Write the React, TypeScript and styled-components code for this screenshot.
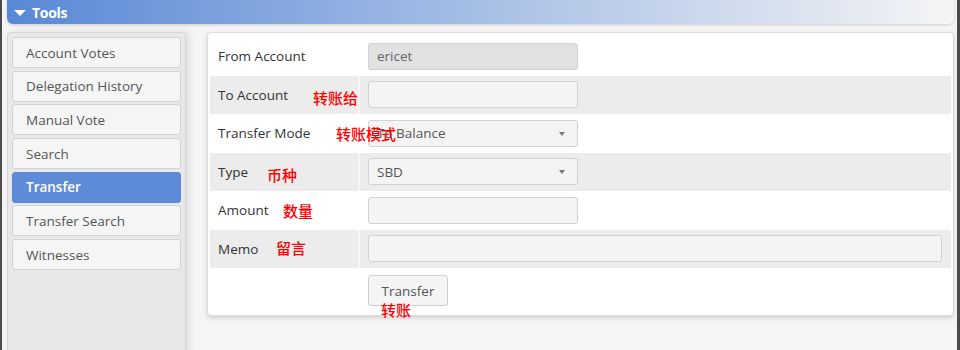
import React from "react";
import styled, { createGlobalStyle } from "styled-components";

const GlobalStyle = createGlobalStyle`
  html, body { margin: 0; padding: 0; }
  body {
    background: #f5f5f5;
    font-family: "Open Sans", "Noto Sans", sans-serif;
    overflow: hidden;
  }
`;

const Frame = styled.div`
  height: 350px;
  box-sizing: border-box;
  border-left: 2px solid #4a4a4a;
  border-right: 3px solid #4a4a4a;
  padding: 0 3px 0 5px;
  background: #f5f5f5;
  overflow: hidden;
`;

const Header = styled.div`
  height: 24px;
  box-sizing: border-box;
  border-radius: 0 0 6px 6px;
  background: linear-gradient(to right, #5888d6, #f5f5f5);
  box-shadow: 0 1px 3px rgba(0, 0, 0, 0.18);
  display: flex;
  align-items: center;
  padding-left: 7px;
  gap: 6px;
  color: #fff;
  font-weight: 700;
  font-size: 14px;
  letter-spacing: -0.3px;
`;

const Caret = styled.span`
  width: 0;
  height: 0;
  border-left: 6px solid transparent;
  border-right: 6px solid transparent;
  border-top: 6px solid #fff;
  margin-top: 1px;
`;

const Body = styled.div`
  display: flex;
  align-items: flex-start;
  gap: 21px;
  margin-top: 8px;
`;

const Sidebar = styled.nav`
  width: 179px;
  height: 340px;
  flex: none;
  box-sizing: border-box;
  background: #e8e8e8;
  border: 1px solid #d6d6d6;
  border-radius: 4px 4px 0 0;
  padding: 4px;
  box-shadow: 3px 0 8px rgba(0, 0, 0, 0.1);
  display: flex;
  flex-direction: column;
  gap: 2.7px;
`;

const NavItem = styled.div<{ $active?: boolean }>`
  height: 31px;
  box-sizing: border-box;
  border: 1px solid ${(p) => (p.$active ? "#5b89d6" : "#d3d3d3")};
  border-radius: 3px;
  background: ${(p) => (p.$active ? "#5e8bd7" : "#f5f5f5")};
  color: ${(p) => (p.$active ? "#fff" : "#555")};
  font-weight: ${(p) => (p.$active ? 600 : 400)};
  font-size: 13.5px;
  display: flex;
  align-items: center;
  padding-left: 13px;
`;

const Panel = styled.div`
  flex: 1;
  background: #fff;
  border: 1px solid #dcdcdc;
  border-radius: 4px;
  box-shadow: 0 2px 5px rgba(0, 0, 0, 0.15);
  padding: 4px 2px 4px 2px;
`;

const Row = styled.div<{ $alt?: boolean; $h?: number }>`
  display: grid;
  grid-template-columns: 148px 1fr;
  column-gap: 2px;
  height: ${(p) => p.$h ?? 38.5}px;
  background: ${(p) => (p.$alt ? "#ececec" : "#fff")};
  position: relative;
`;

const LabelCell = styled.div`
  position: relative;
  display: flex;
  align-items: center;
  padding-left: 8px;
  font-size: 13.5px;
  color: #333;
`;

const ValueCell = styled.div<{ $top?: boolean }>`
  position: relative;
  display: flex;
  align-items: ${(p) => (p.$top ? "flex-start" : "center")};
  padding: ${(p) => (p.$top ? "7px 9px 0 8px" : "0 9px 0 8px")};
  box-shadow: -2px 0 0 rgba(255, 255, 255, 0.6);
`;

const TextInput = styled.input<{ $wide?: boolean; $readonly?: boolean }>`
  box-sizing: border-box;
  width: ${(p) => (p.$wide ? "100%" : "210px")};
  height: 27px;
  border: 1px solid #d2d2d2;
  border-radius: 3px;
  background: ${(p) => (p.$readonly ? "#e1e1e1" : "#f4f4f4")};
  color: #666;
  font-family: "Open Sans", sans-serif;
  font-size: 13.5px;
  padding: 0 8px;
  outline: none;
`;

const SelectWrap = styled.div`
  position: relative;
  width: 210px;
  height: 27px;
  &::after {
    content: "";
    position: absolute;
    right: 13px;
    top: 12px;
    border-left: 3.5px solid transparent;
    border-right: 3.5px solid transparent;
    border-top: 4px solid #777;
  }
`;

const Select = styled.select`
  appearance: none;
  -webkit-appearance: none;
  box-sizing: border-box;
  width: 100%;
  height: 27px;
  border: 1px solid #d2d2d2;
  border-radius: 3px;
  background: #f4f4f4;
  color: #555;
  font-family: "Open Sans", sans-serif;
  font-size: 13.5px;
  padding: 0 8px;
  outline: none;
`;

const Button = styled.button`
  box-sizing: border-box;
  width: 80px;
  height: 31px;
  border: 1px solid #cfcfcf;
  border-radius: 3px;
  background: #f4f4f4;
  color: #555;
  font-family: "Open Sans", sans-serif;
  font-size: 13.5px;
`;

const Note = styled.span<{ $x: number; $y: number }>`
  position: absolute;
  left: ${(p) => p.$x}px;
  top: ${(p) => p.$y}px;
  z-index: 2;
  color: #ff0000;
  font-family: "Noto Sans CJK SC", sans-serif;
  font-weight: 500;
  font-size: 15px;
  line-height: 15px;
  white-space: nowrap;
  pointer-events: none;
`;

const navItems = [
  "Account Votes",
  "Delegation History",
  "Manual Vote",
  "Search",
  "Transfer",
  "Transfer Search",
  "Witnesses",
];

export default function App() {
  return (
    <>
      <GlobalStyle />
      <Frame>
        <Header>
          <Caret />
          Tools
        </Header>
        <Body>
          <Sidebar>
            {navItems.map((n) => (
              <NavItem key={n} $active={n === "Transfer"}>
                {n}
              </NavItem>
            ))}
          </Sidebar>
          <Panel>
            <Row>
              <LabelCell>From Account</LabelCell>
              <ValueCell>
                <TextInput $readonly readOnly value="ericet" />
              </ValueCell>
            </Row>
            <Row $alt>
              <LabelCell>
                To Account
                <Note $x={103} $y={14.5}>转账给</Note>
              </LabelCell>
              <ValueCell>
                <TextInput defaultValue="" />
              </ValueCell>
            </Row>
            <Row>
              <LabelCell>
                Transfer Mode
                <Note $x={126} $y={11.5}>转账模式</Note>
              </LabelCell>
              <ValueCell>
                <SelectWrap>
                  <Select defaultValue="To Balance">
                    <option>To Balance</option>
                    <option>To Savings</option>
                  </Select>
                </SelectWrap>
              </ValueCell>
            </Row>
            <Row $alt>
              <LabelCell>
                Type
                <Note $x={57} $y={14.5}>币种</Note>
              </LabelCell>
              <ValueCell>
                <SelectWrap>
                  <Select defaultValue="SBD">
                    <option>SBD</option>
                    <option>STEEM</option>
                  </Select>
                </SelectWrap>
              </ValueCell>
            </Row>
            <Row>
              <LabelCell>
                Amount
                <Note $x={73} $y={11.5}>数量</Note>
              </LabelCell>
              <ValueCell>
                <TextInput defaultValue="" />
              </ValueCell>
            </Row>
            <Row $alt>
              <LabelCell>
                Memo
                <Note $x={66} $y={10.5}>留言</Note>
              </LabelCell>
              <ValueCell>
                <TextInput $wide defaultValue="" />
              </ValueCell>
            </Row>
            <Row $h={43}>
              <LabelCell />
              <ValueCell $top>
                <Button>Transfer</Button>
                <Note $x={21} $y={33.5}>转账</Note>
              </ValueCell>
            </Row>
          </Panel>
        </Body>
      </Frame>
    </>
  );
}
